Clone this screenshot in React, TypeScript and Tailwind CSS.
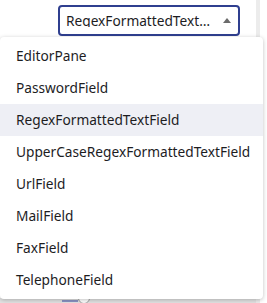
const items = [
  'EditorPane',
  'PasswordField',
  'RegexFormattedTextField',
  'UpperCaseRegexFormattedTextField',
  'UrlField',
  'MailField',
  'FaxField',
  'TelephoneField',
];

export default function App() {
  const selected = 'RegexFormattedTextField';

  return (
    <div className="relative flex w-[267px] h-[303px] overflow-hidden bg-white font-['Noto_Sans',sans-serif] text-[13.7px] text-[#1d1d1f]">
      {/* page content under the popup */}
      <div className="flex flex-col w-[256px]">
        <div className="pt-[5px] pl-[58px]">
          <div className="flex items-center w-[182px] h-[31px] border-2 border-[#2f3f8f] rounded-[4px] bg-white pl-[6px] pr-[7px]">
            <span className="flex-1 min-w-0 truncate leading-none">{selected}</span>
            <svg width="8" height="5" viewBox="0 0 8 5" className="ml-3 shrink-0">
              <path d="M0 5 L4 0 L8 5 Z" fill="#6b6b6b" />
            </svg>
          </div>
        </div>
        <div className="flex-1" />
        <div className="flex items-center h-[5px] bg-[#e2e2e2] pl-[62px]">
          <div className="w-[16px] h-[2px] bg-[#8a93c4]" />
          <div className="w-[12px] h-[12px] -mt-[6px] rounded-full border border-[#a0a0a0] bg-white" />
        </div>
      </div>
      {/* side rail */}
      <div className="w-[4px] bg-[#ececec]" />
      <div className="flex-1" />

      {/* dropdown popup */}
      <div className="absolute left-0 top-[37px] w-[263px] py-[3px] bg-white rounded-[4px] shadow-[0_1px_4px_rgba(0,0,0,0.25)]">
        {items.map((item) => (
          <div
            key={item}
            className={`h-[32px] flex items-center pl-[16px] ${item === selected ? 'bg-[#eeeff5]' : ''}`}
          >
            {item}
          </div>
        ))}
      </div>
    </div>
  );
}
